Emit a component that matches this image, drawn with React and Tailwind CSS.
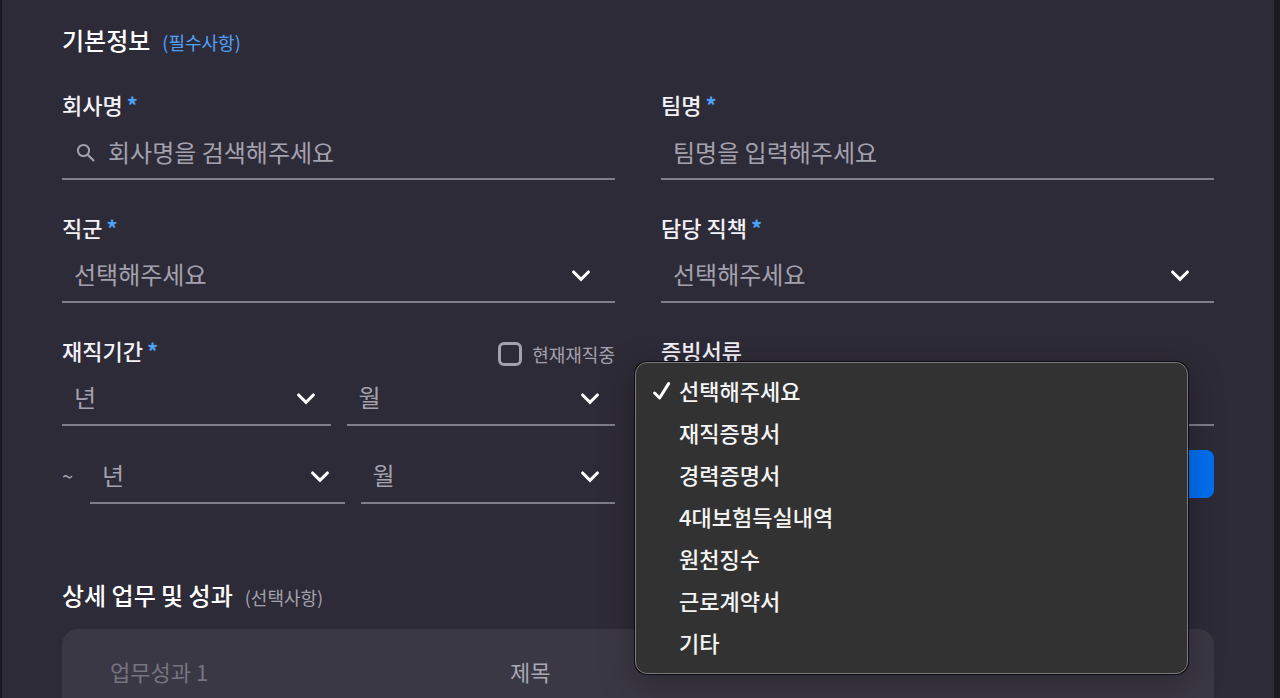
import React from "react";

function Label({ htmlFor, required, children }) {
  return (
    <label htmlFor={htmlFor} className="block text-[22px] leading-8 font-medium text-[#f3f2f8]">
      {children}
      {required && <span className="ml-1 font-bold text-[#4ea1fb]">*</span>}
    </label>
  );
}

function Chevron({ className }) {
  return (
    <svg
      viewBox="0 0 20 14"
      aria-hidden="true"
      className={`pointer-events-none absolute top-[22px] h-3.5 w-5 ${className}`}
    >
      <path d="M2.6 3 L10 10.4 L17.4 3" fill="none" stroke="#fff" strokeWidth="3.1" strokeLinecap="round" />
    </svg>
  );
}

function SelectField({ id, label, text, chevron = "right-[15px]" }) {
  return (
    <div className="relative min-w-0 flex-1">
      <select
        id={id}
        aria-label={label}
        className="block h-14 w-full appearance-none rounded-none border-b-2 border-[#807e8a] bg-transparent pl-3 text-[24px] text-[#a3a1ae] outline-none"
      >
        <option>{text}</option>
      </select>
      <Chevron className={chevron} />
    </div>
  );
}

const DOCUMENTS = ["선택해주세요", "재직증명서", "경력증명서", "4대보험득실내역", "원천징수", "근로계약서", "기타"];

function DocumentMenu() {
  return (
    <ul
      role="listbox"
      aria-label="증빙서류"
      className="absolute top-[-8px] left-[-26px] z-10 w-full rounded-xl border border-[#7b7b7b] bg-[#323232] pt-1.5 pb-2.5 shadow-[0_0_0_1px_#0c0c10,0_10px_36px_rgba(0,0,0,0.3)]"
    >
      {DOCUMENTS.map((name, i) => (
        <li key={name} role="option" aria-selected={i === 0}>
          <button type="button" className="flex h-[42px] w-full items-center pl-[17px] text-left text-[22px] font-medium text-[#f5f5f5]">
            <span className="w-[26px]">
              {i === 0 && (
                <svg viewBox="0 0 18 20" aria-hidden="true" className="h-5 w-[18px]">
                  <path
                    d="M1.6 13 L6.6 18 L15.6 3.6"
                    fill="none"
                    stroke="#fff"
                    strokeWidth="3"
                    strokeLinecap="round"
                    strokeLinejoin="round"
                  />
                </svg>
              )}
            </span>
            {name}
          </button>
        </li>
      ))}
    </ul>
  );
}

export default function App() {
  return (
    <div className="flex min-h-screen flex-col border-r-6 border-l-2 border-[#1b1922] bg-[#2e2b38] px-15 pt-[22px] font-['Noto_Sans_CJK_KR','Noto_Sans',sans-serif]">
      <h2 className="flex items-baseline gap-3 text-[24px] leading-9 font-medium text-white">
        기본정보
        <span className="text-[18px] font-normal text-[#4ea1fb]">(필수사항)</span>
      </h2>

      <form className="mt-7 grid grid-cols-2 gap-x-[46px] gap-y-[31px]">
        <div>
          <Label htmlFor="company" required>회사명</Label>
          <div className="mt-1 flex h-14 items-center border-b-2 border-[#807e8a] pl-3.5">
            <svg viewBox="0 0 20 20" aria-hidden="true" className="mt-1 h-5 w-5 shrink-0">
              <circle cx="7.5" cy="7.5" r="5.6" fill="none" stroke="#a3a1ae" strokeWidth="2" />
              <path d="M11.8 11.8 L18 18" fill="none" stroke="#a3a1ae" strokeWidth="2.2" />
            </svg>
            <input
              id="company"
              placeholder="회사명을 검색해주세요"
              className="ml-3 h-full min-w-0 flex-1 bg-transparent text-[24px] text-[#a3a1ae] outline-none placeholder:text-[#a3a1ae]"
            />
          </div>
        </div>

        <div>
          <Label htmlFor="team" required>팀명</Label>
          <input
            id="team"
            placeholder="팀명을 입력해주세요"
            className="mt-1 block h-14 w-full border-b-2 border-[#807e8a] bg-transparent pl-3 text-[24px] text-[#a3a1ae] outline-none placeholder:text-[#a3a1ae]"
          />
        </div>

        <div>
          <Label htmlFor="job" required>직군</Label>
          <div className="mt-1 flex">
            <SelectField id="job" text="선택해주세요" chevron="right-6" />
          </div>
        </div>

        <div>
          <Label htmlFor="position" required>담당 직책</Label>
          <div className="mt-1 flex">
            <SelectField id="position" text="선택해주세요" chevron="right-6" />
          </div>
        </div>

        <div>
          <div className="flex h-8 items-start justify-between">
            <Label htmlFor="start-year" required>재직기간</Label>
            <label className="mt-1 flex items-center gap-2.5 text-[18px] leading-8 text-[#a3a1ae]">
              <input
                type="checkbox"
                className="h-6 w-6 appearance-none rounded-md border-3 border-[#a3a1ae] bg-transparent"
              />
              현재재직중
            </label>
          </div>
          <div className="mt-1 flex gap-4">
            <SelectField id="start-year" text="년" />
            <SelectField label="시작 월" text="월" />
          </div>
          <div className="mt-[22px] flex items-center gap-4">
            <span className="w-3 text-[20px] text-[#a3a1ae]">~</span>
            <SelectField label="종료 년" text="년" />
            <SelectField label="종료 월" text="월" />
          </div>
        </div>

        <div>
          <Label htmlFor="document">증빙서류</Label>
          <div className="relative mt-1">
            <SelectField id="document" text="선택해주세요" chevron="right-6" />
            <DocumentMenu />
          </div>
          <button type="button" aria-label="파일 첨부" className="mt-6 block h-12 w-full rounded-lg bg-[#0070f3]" />
        </div>
      </form>

      <h2 className="mt-[73px] flex items-baseline gap-3 text-[24px] leading-9 font-medium text-white">
        상세 업무 및 성과
        <span className="text-[18px] font-normal text-[#a3a1ae]">(선택사항)</span>
      </h2>

      <section className="mt-3.5 flex flex-1 rounded-t-2xl bg-[#3b3845] px-12 pt-[26px] text-[22px] leading-8">
        <h3 className="w-[400px] text-[#76747f]">업무성과 1</h3>
        <p className="text-[#a9a7b4]">제목</p>
      </section>
    </div>
  );
}
